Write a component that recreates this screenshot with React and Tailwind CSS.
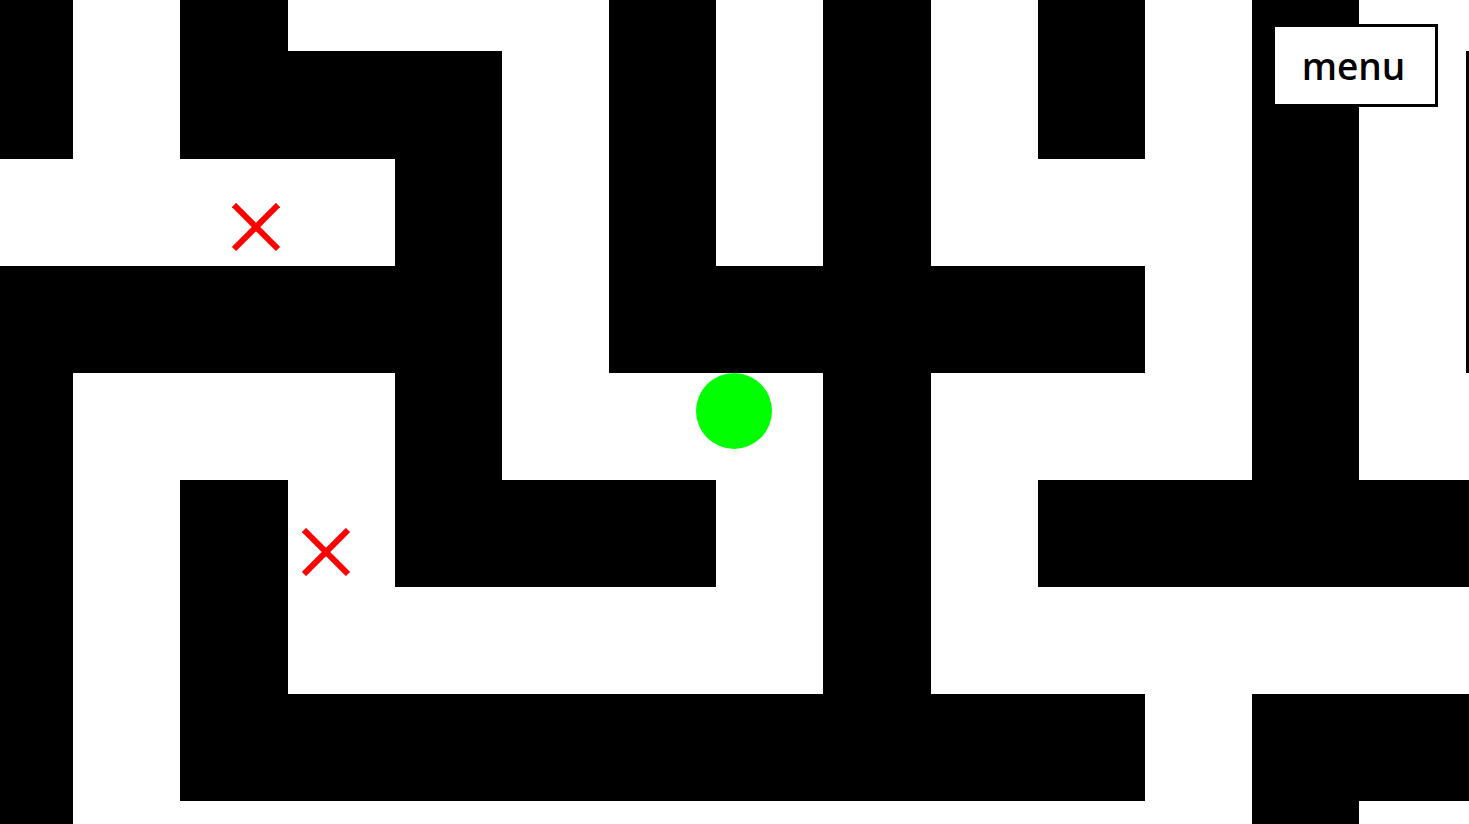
import React from "react";

// 1 = wall, 0 = floor. Grid is offset so the visible area starts mid-cell.
const MAZE = [
  "101000101010100",
  "101110101010101",
  "000010101000101",
  "111110111110101",
  "100010001000100",
  "101011101011111",
  "101000001000000",
  "101111111110111",
  "100000000000100",
];

const MARKS = [
  { id: 1, className: "left-[232px] top-[203px]" },
  { id: 2, className: "left-[302px] top-[528px]" },
];

function Cross({ className }) {
  return (
    <svg
      className={`absolute w-[48px] h-[48px] ${className}`}
      viewBox="0 0 48 48"
    >
      <line x1="2" y1="2" x2="46" y2="46" stroke="#ff0000" strokeWidth="6" />
      <line x1="46" y1="2" x2="2" y2="46" stroke="#ff0000" strokeWidth="6" />
    </svg>
  );
}

export default function App() {
  return (
    <div className="relative w-screen h-screen overflow-hidden bg-white">
      <div className="grid grid-cols-[107px_107px_108px_107px_107px_107px_107px_107px_108px_107px_107px_107px_107px_107px_107px] grid-rows-[107px_108px_107px_107px_107px_107px_107px_107px_107px] -ml-[34px] -mt-[56px]">
        {MAZE.map((row, r) =>
          row
            .split("")
            .map((cell, c) => (
              <div
                key={`${r}-${c}`}
                className={cell === "1" ? "bg-black" : "bg-white"}
              />
            ))
        )}
      </div>

      {MARKS.map((m) => (
        <Cross key={m.id} className={m.className} />
      ))}

      <div className="absolute left-[696px] top-[373px] w-[76px] h-[76px] rounded-full bg-[#00ff00]" />

      <button className="absolute left-[1272px] top-[24px] w-[166px] h-[83px] border-[3px] border-black bg-white flex items-center justify-center pr-[3px] text-[37px] font-semibold text-black font-['Open_Sans',sans-serif]">
        menu
      </button>
    </div>
  );
}
